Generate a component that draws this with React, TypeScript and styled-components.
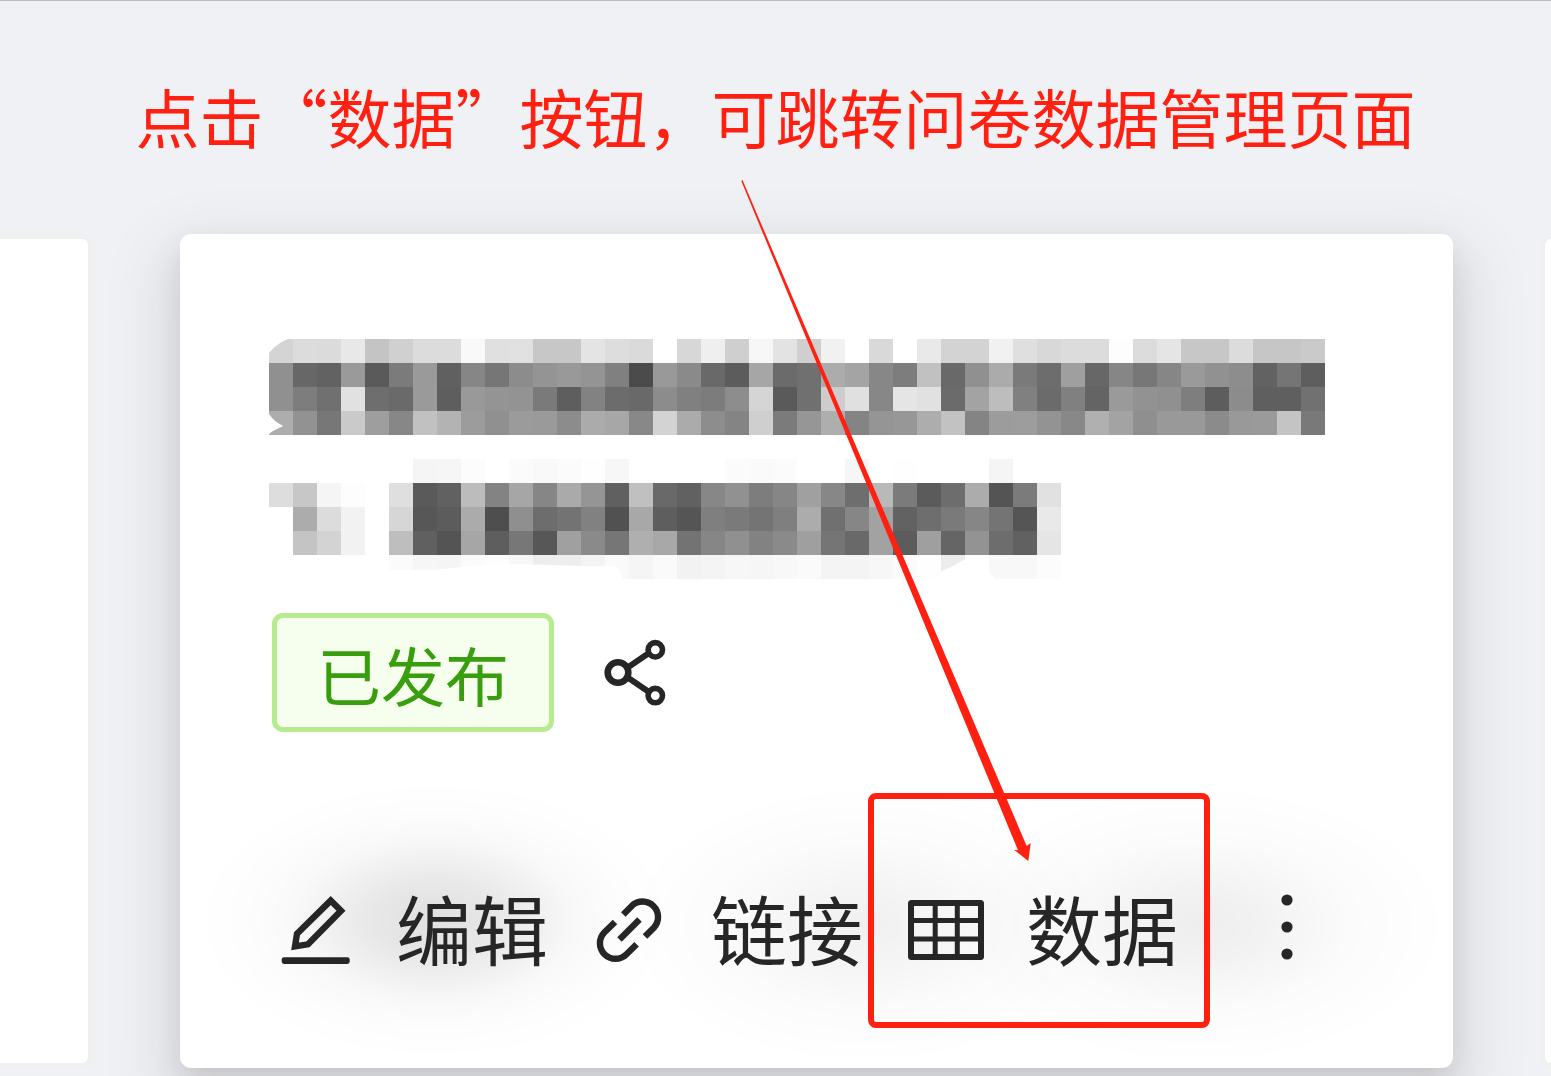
import React from "react";
import styled, { createGlobalStyle } from "styled-components";

const RED = "#ff2011";
const INK = "#262626";

const GlobalStyle = createGlobalStyle`
  *, *::before, *::after { box-sizing: border-box; }
  body {
    margin: 0;
    background: #f0f1f5;
    font-family: "Noto Sans CJK SC", "Noto Sans", sans-serif;
  }
`;

const Page = styled.main`
  display: flex;
  flex-direction: column;
  min-height: 100vh;
  overflow: hidden;
  border-top: 1px solid #bbbcbe;
`;

const Notice = styled.h1`
  margin: 0;
  padding: 66px 0 71px;
  color: ${RED};
  font-size: 64px;
  font-weight: 400;
  line-height: 96px;
  text-align: center;
  white-space: nowrap;
`;

const CardRow = styled.div`
  display: grid;
  grid-template-columns: 93px minmax(0, 1fr) 11px;
  column-gap: 87px;
  padding-bottom: 8px;
`;

const SideCard = styled.aside<{ $side: "left" | "right" }>`
  background: #fff;
  border: 5px solid #f0f0f0;
  border-${(p) => p.$side}: 0;
  border-radius: ${(p) => (p.$side === "left" ? "0 11px 11px 0" : "11px 0 0 11px")};
`;

const Card = styled.article`
  position: relative;
  display: flex;
  flex-direction: column;
  padding: 105px 89px 0;
  background: #fff;
  border-radius: 11px;
  box-shadow:
    0 5px 10px -10px rgba(0, 0, 0, 0.16),
    0 16px 32px 0 rgba(0, 0, 0, 0.1),
    0 27px 64px 21px rgba(0, 0, 0, 0.08);
`;

const Mosaic = styled.svg`
  display: block;
  width: 1056px;
  max-width: 100%;
`;

const Meta = styled.div`
  display: flex;
  align-items: center;
  gap: 46px;
  padding: 34px 3px 0;
`;

const Tag = styled.span`
  padding: 7px 40px 6px;
  border: 5px solid #b7eb8f;
  border-radius: 11px;
  background: #f6ffed;
  color: #389e0d;
  font-size: 64px;
  line-height: 96px;
`;

const IconButton = styled.button`
  display: flex;
  padding: 0;
  border: 0;
  background: none;
  color: ${INK};
  cursor: pointer;
`;

const Actions = styled.footer`
  display: flex;
  gap: 45px;
  margin: 48px -89px 0;
  padding: 100px 98px 88px;
  border-radius: 0 0 11px 11px;
  background:
    radial-gradient(ellipse 240px 140px at 255px 140px, rgba(0, 0, 0, 0.12), rgba(0, 0, 0, 0.095) 25%, rgba(0, 0, 0, 0.025) 60%, rgba(0, 0, 0, 0.008) 80%, transparent),
    radial-gradient(ellipse 240px 140px at 685px 145px, rgba(0, 0, 0, 0.06), rgba(0, 0, 0, 0.045) 25%, rgba(0, 0, 0, 0.015) 60%, transparent),
    radial-gradient(ellipse 250px 140px at 1020px 145px, rgba(0, 0, 0, 0.065), rgba(0, 0, 0, 0.05) 25%, rgba(0, 0, 0, 0.015) 60%, transparent);
`;

const Action = styled.button`
  position: relative;
  display: flex;
  align-items: center;
  gap: 42px;
  padding: 0;
  border: 0;
  background: none;
  color: ${INK};
  font: 400 76px/94px "Noto Sans CJK SC", "Noto Sans", sans-serif;
  white-space: nowrap;
  cursor: pointer;
`;

const ActionLabel = styled.span`
  padding-bottom: 6px;
`;

const MoreAction = styled(Action)`
  justify-content: center;
  width: 128px;
`;

const Highlight = styled.span`
  position: absolute;
  inset: -87px -32px -48px -40px;
  border: 6px solid ${RED};
  border-radius: 8px;
  pointer-events: none;
`;

const Arrow = styled.svg`
  position: absolute;
  top: -54px;
  left: 560px;
  pointer-events: none;
`;

const CELL = 24;

const TITLE_ROWS: { y: number; shades: string }[] = [
  { y: 0, shades: "d4dcdbe8c4d0dcdcf9e0e1c7c7e4dddaffd7efcff7e3cff1ffd9ffe9d3d3f1dfd8dcdcfddce5c7c7dcc6c6ca" },
  { y: 24, shades: "9067629a5a7b9a6086768c949994804b998a695ca66b70aca4877dc16990ab7a6d9f678677869a918d62755e" },
  { y: 48, shades: "907d70e16e6a9a5e9994937a5e826c698c807c8dd55a70cde087e5e16ba3bd806b80649a92907e5d8c5f5f71" },
  { y: 72, shades: "ad9277ca9e87c1b39c909b9a8caba788d3ab8d84cf7b96ae849597adc2849c9d9388b0a38f99998b999ac479" },
  { y: 120, shades: "fffffffffffff5f6fcfffbf9fbfef7fffffffffbfafbfffff6fffefffffff5ffff" },
  { y: 144, shades: "ddc7f5fdffdf5a61bc83a686aa9560c0696187917d86a0876eb97b5b6dac547be1" },
  { y: 168, shades: "ffacdcf2ffd6575cab4e8f6d738151a85e557f7a747fac7086a2626e7a867455e9" },
  { y: 192, shades: "ffc4d3f2ffbe6054a65e7757a08a76afa8738690828a9f7569a25c9f65936d61e5" },
  { y: 216, shades: "fffffffffffbf6f5fbfdf7edeef3faf5faf2f4f7f6f8faf4f4f7fbfeecfff8f8fc" },
];

function HiddenTitle() {
  return (
    <Mosaic viewBox="0 0 1056 240" shapeRendering="crispEdges" aria-hidden="true">
      {TITLE_ROWS.map(({ y, shades }) =>
        (shades.match(/../g) ?? []).map((s, i) => (
          <rect key={`${y}-${i}`} x={i * CELL} y={y} width={CELL} height={CELL} fill={`#${s}${s}${s}`} />
        )),
      )}
      <g fill="#fff" shapeRendering="auto">
        <path d="M0 0H19C11 3 5 8 0 14Z" />
        <path d="M0 75C4 81 9 84 14 87C9 90 4 91 0 95Z" />
        <path d="M120 231H165C184 229 202 226 220 226C270 224 310 228 345 227Q350 228 354 240H120Z" />
        <path d="M672 240V232C684 229 692 220 700 220C712 218 714 228 726 240Z" />
      </g>
    </Mosaic>
  );
}

const ShareIcon = () => (
  <svg width="72" height="72" viewBox="0 0 72 72" fill="none" stroke="currentColor" strokeWidth="6" aria-hidden="true">
    <circle cx="18" cy="35.5" r="10.3" strokeWidth="6.6" />
    <circle cx="55.3" cy="12.8" r="7.2" strokeWidth="5.6" />
    <circle cx="55.3" cy="58.6" r="7.2" strokeWidth="5.6" />
    <path d="M27 31L49 16M27 40L49 55" />
  </svg>
);

const EditIcon = () => (
  <svg width="76" height="76" viewBox="0 0 76 76" fill="none" stroke="currentColor" strokeWidth="6.4" aria-hidden="true">
    <path d="M52.7 8.6L63 18.8L30 52.3L17 54.3L19 41.8Z" />
    <rect x="3.7" y="65.2" width="68" height="6.8" rx="2.4" fill="currentColor" stroke="none" />
  </svg>
);

const LinkIcon = () => (
  <svg width="76" height="76" viewBox="0 0 76 76" fill="none" stroke="currentColor" strokeWidth="6.4" aria-hidden="true">
    <path d="M30.3 22.4L39 13.7A15.5 15.5 0 0 1 61 35.5L52 44.6" />
    <path d="M22 30L11.5 40.2A15.5 15.5 0 0 0 33.5 62.2L43.6 52.2" />
    <path d="M46.5 27.5L26.5 47.5" />
  </svg>
);

const TableIcon = () => (
  <svg width="76" height="76" viewBox="0 0 76 76" fill="none" stroke="currentColor" aria-hidden="true">
    <rect x="3" y="11" width="70" height="54" rx="0.5" strokeWidth="6" strokeLinejoin="round" />
    <path d="M27.2 11V65M49.3 11V65M3 28.4H73M3 47H73" strokeWidth="5" />
  </svg>
);

const MoreIcon = () => (
  <svg width="76" height="76" viewBox="0 0 76 76" fill="currentColor" aria-hidden="true">
    <circle cx="38" cy="8" r="5.6" />
    <circle cx="38" cy="35" r="5.6" />
    <circle cx="38" cy="62" r="5.6" />
  </svg>
);

export default function App() {
  return (
    <>
      <GlobalStyle />
      <Page>
        <Notice>点击“数据”按钮，可跳转问卷数据管理页面</Notice>
        <CardRow>
          <SideCard $side="left" />
          <Card>
            <HiddenTitle />
            <Meta>
              <Tag>已发布</Tag>
              <IconButton type="button" aria-label="分享">
                <ShareIcon />
              </IconButton>
            </Meta>
            <Actions>
              <Action type="button">
                <EditIcon />
                <ActionLabel>编辑</ActionLabel>
              </Action>
              <Action type="button">
                <LinkIcon />
                <ActionLabel>链接</ActionLabel>
              </Action>
              <Action type="button">
                <TableIcon />
                <ActionLabel>数据</ActionLabel>
                <Highlight />
              </Action>
              <MoreAction type="button" aria-label="更多">
                <MoreIcon />
              </MoreAction>
            </Actions>
            <Arrow width="300" height="684" viewBox="740 180 300 684" aria-hidden="true">
              <path fill={RED} d="M742.5 180L1026.7 846L1030.7 843L1028.3 861L1014 849.7L1018 850.3L741.3 181Z" />
            </Arrow>
          </Card>
          <SideCard $side="right" />
        </CardRow>
      </Page>
    </>
  );
}
